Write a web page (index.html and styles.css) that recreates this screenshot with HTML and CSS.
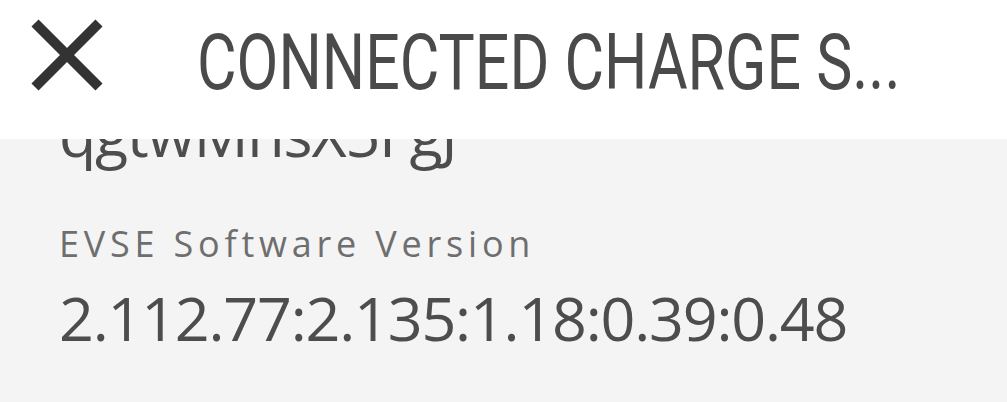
FILE: index.html
```html
<!DOCTYPE html>
<html lang="en">
<head>
    <meta charset="UTF-8">
    <meta name="viewport" content="width=device-width, initial-scale=1.0">
    <title>Connected Charge Station</title>
    <link rel="stylesheet" href="styles.css">
</head>
<body>
    <header class="top-bar">
        <button class="close-btn" aria-label="Close">
            <svg viewBox="0 0 72 72" width="72" height="72">
                <path d="M4 4 L68 68 M68 4 L4 68" stroke="#333" stroke-width="10" fill="none"/>
            </svg>
        </button>
        <h1 class="title">CONNECTED CHARGE S...</h1>
    </header>

    <main class="details">
        <div class="field">
            <div class="field-value">qgtwMnsX5FgJ</div>
        </div>
        <div class="field">
            <div class="field-label">EVSE Software Version</div>
            <div class="field-value">2.112.77:2.135:1.18:0.39:0.48</div>
        </div>
    </main>
</body>
</html>
```

FILE: styles.css
```css
body {
    margin: 0;
    background-color: #f4f4f4;
    font-family: "Open Sans", "Noto Sans", sans-serif;
    color: #4d4d4d;
}
.top-bar {
    position: fixed;
    top: 0;
    left: 0;
    right: 0;
    height: 139px;
    background-color: #fff;
    display: flex;
    align-items: flex-start;
}
.close-btn {
    margin: 19px 0 0 31px;
    width: 72px;
    height: 72px;
    padding: 0;
    border: none;
    background: none;
}
.close-btn svg {
    display: block;
}
.title {
    margin: 25px 0 0 94px;
    font-family: Roboto, "Liberation Sans", sans-serif;
    font-weight: normal;
    font-size: 77px;
    line-height: 1;
    color: #4a4a4a;
    white-space: nowrap;
    transform: scaleX(0.79);
    transform-origin: left top;
}
.details {
    padding: 94px 59px 0;
}
.field + .field {
    margin-top: 46px;
}
.field-label {
    font-size: 36px;
    color: #6e6e6e;
    letter-spacing: 4.8px;
    line-height: 48px;
    margin-bottom: 10px;
}
.field-value {
    font-size: 61px;
    letter-spacing: -1.2px;
    line-height: 80px;
}
```
